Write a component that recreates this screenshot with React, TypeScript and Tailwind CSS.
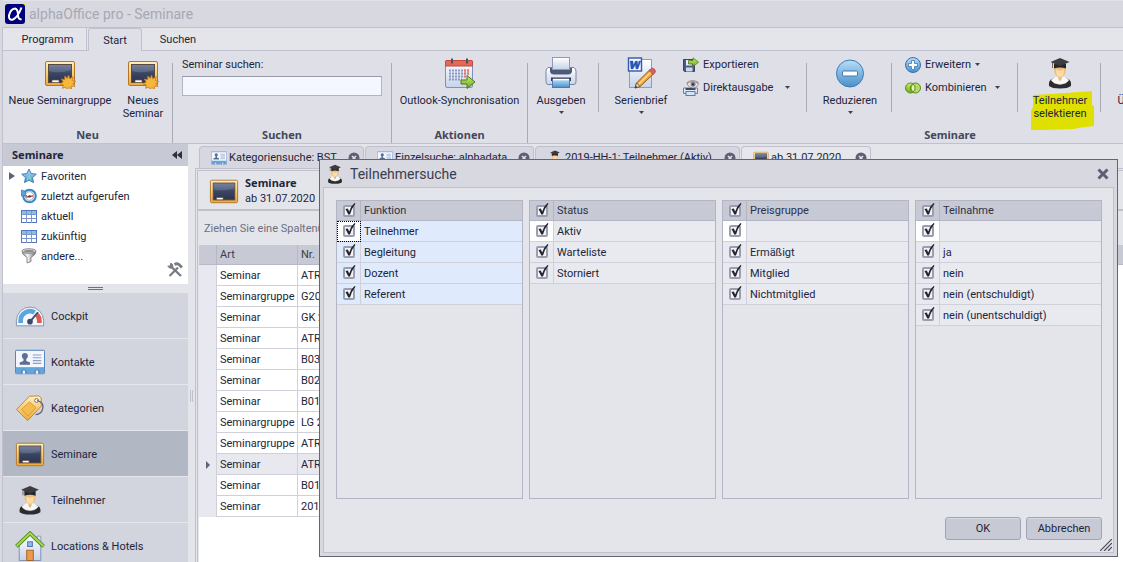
import { useState, type ReactNode } from "react";

type IconProps = { className?: string };

function Defs() {
  return (
    <svg className="absolute size-0" aria-hidden="true">
      <defs>
        <linearGradient id="gold" x1="0" y1="0" x2="0" y2="1">
          <stop offset="0" stopColor="#fff0c0" />
          <stop offset="1" stopColor="#f0a830" />
        </linearGradient>
        <linearGradient id="slate" x1="0" y1="0" x2="0" y2="1">
          <stop offset="0" stopColor="#6c7a98" />
          <stop offset="0.5" stopColor="#3a4560" />
          <stop offset="1" stopColor="#2b3450" />
        </linearGradient>
        <linearGradient id="sky" x1="0" y1="0" x2="0" y2="1">
          <stop offset="0" stopColor="#b8def6" />
          <stop offset="1" stopColor="#4a8fca" />
        </linearGradient>
        <linearGradient id="paper" x1="0" y1="0" x2="0" y2="1">
          <stop offset="0" stopColor="#ffffff" />
          <stop offset="1" stopColor="#c6d3ea" />
        </linearGradient>
        <linearGradient id="lime" x1="0" y1="0" x2="0" y2="1">
          <stop offset="0" stopColor="#c8ee6c" />
          <stop offset="1" stopColor="#6ba81c" />
        </linearGradient>
        <linearGradient id="metal" x1="0" y1="0" x2="1" y2="0">
          <stop offset="0" stopColor="#8c8c8c" />
          <stop offset="0.4" stopColor="#f4f4f4" />
          <stop offset="1" stopColor="#6c6c6c" />
        </linearGradient>
      </defs>
    </svg>
  );
}

function Board({ className, star }: IconProps & { star?: boolean }) {
  return (
    <svg viewBox="0 0 32 32" className={className}>
      <rect x="1.500" y="4.500" width="29" height="24" rx="1.500" fill="url(#gold)" stroke="#b5742a" />
      <rect x="4.500" y="7.500" width="23" height="18" fill="url(#slate)" stroke="#5a4a3c" />
      <path d="M5 8h22v5Q15 17 5 14z" fill="#8391ae" opacity=".35" />
      <rect x="8" y="23" width="7" height="2.400" fill="#fff" stroke="#6b5148" strokeWidth=".7" />
      {star && (
        <path
          d="M24.500 18l1.300 3.800 3.500-2-1 3.800 3.500.9-3 2 2.200 3-3.700-.4.200 3.400-2.700-2-1.900 2.500-1.100-3-3.300 1.300.9-3.400-3.400-.9 3.200-1.900-1.900-3 3.400.6.100-3.600 2.500 2.300z"
          fill="#f6b83c"
          stroke="#c97b1a"
          strokeWidth=".8"
        />
      )}
    </svg>
  );
}

function Graduate({ className }: IconProps) {
  return (
    <svg viewBox="0 0 32 32" className={className}>
      <path d="M10 10h12l-.500 5.500q-1 4-3.500 6V24h-4v-2.500q-2.500-2-3.500-6z" fill="#f0bc78" />
      <path d="M12 12q4 3 8 0l-.500 6q-3.500 4-7 0z" fill="#fbdcaa" />
      <path d="M5 29q-1-6 4-7.500l4-1 3 2 3-2 4 1q5 1.500 4 7.500-3 2.500-11 2.500T5 29z" fill="#2c2c30" />
      <path d="M11 20l2-1 3 4 3-4 2 1 4 3q-2.500 4-9 4.500Q9.500 27 7 23z" fill="#f8f8f8" stroke="#d0d0d0" strokeWidth=".4" />
      <path d="M14 21.500h4L16 24.500z" fill="#eeb878" />
      <path d="M10 6.500h12v5q-6-2-12 0z" fill="#26262a" />
      <path d="M16 1l9.500 4L16 9 6.500 5z" fill="#3b3b40" />
      <path d="M8.500 6v5" stroke="#6c6450" />
    </svg>
  );
}

function Calendar({ className }: IconProps) {
  return (
    <svg viewBox="0 0 32 32" className={className}>
      <rect x="1.500" y="3.500" width="27" height="27" rx="1.500" fill="url(#paper)" stroke="#8090bc" />
      <path d="M1.500 9V4.500q0-1 1-1h25q1 0 1 1V9z" fill="#e46a58" stroke="#c0483c" />
      <path d="M8 1.500v5M23 1.500v5" stroke="#4d5262" strokeWidth="2" />
      <path d="M5 13.500h20M5 16.500h20M5 19.500h15M5 22.500h13" stroke="#8898c4" strokeWidth="2" strokeDasharray="2 1" />
      <path d="M20 13.500h5M20 16.500h5M20 19.500h3" stroke="#f07058" strokeWidth="2" strokeDasharray="2 1" />
      <path d="M17 23h6v-4.500l8 6.500-8 6.500V27h-6z" fill="url(#lime)" stroke="#4c7a16" />
    </svg>
  );
}

function Printer({ className }: IconProps) {
  return (
    <svg viewBox="0 0 32 32" className={className}>
      <path d="M3 10.500h26q2 1 2 4v10q0 3-2 3H3q-2 0-2-3v-10q0-3 2-4z" fill="url(#paper)" stroke="#7786a8" />
      <path d="M5 11h22v4q-1 2.500-4 2.500H9q-3 0-4-2.500z" fill="#4e5b78" />
      <rect x="7.500" y=".500" width="17" height="12" fill="url(#paper)" stroke="#8f9ab4" />
      <path d="M6 20.500h20V24H6z" fill="#303a54" />
      <rect x="7.500" y="22.500" width="17" height="8" fill="url(#sky)" stroke="#5078a8" />
      <path d="M8 22.500h16" stroke="#fff" strokeWidth="1.500" />
    </svg>
  );
}

function WordPencil({ className }: IconProps) {
  return (
    <svg viewBox="0 0 32 32" className={className}>
      <rect x="4.500" y="2.500" width="22" height="28" fill="url(#paper)" stroke="#8c9cc4" />
      <rect x="3.500" y="1" width="13" height="13" fill="#f2f6ff" stroke="#3458ac" strokeWidth="1.400" />
      <path
        d="M5 4h3l.4 4L10.500 4h1.800l.6 4 1-4h2L13 12h-2l-.8-4-2.200 4H6z"
        fill="#2c54b4"
        stroke="#2c54b4"
        strokeWidth=".3"
      />
      <path d="M10 31l1.500-5L25 12.500l4 4L15 29.500z" fill="#f3a43c" stroke="#8d5a2b" />
      <path d="M14 27L26.500 14.500" stroke="#ffe090" strokeWidth="1.400" />
      <path d="M24 13.500l3-2.500q3.500.5 3.500 4l-2.500 2.500z" fill="#d9605c" stroke="#a44848" strokeWidth=".7" />
      <path d="M10 31l1.500-5 3.500 3.500z" fill="#f5dcc0" stroke="#61503c" strokeWidth=".8" />
      <path d="M10 31l.7-2.400 1.800 1.700z" fill="#333" />
    </svg>
  );
}

function ExportIcon({ className }: IconProps) {
  return (
    <svg viewBox="0 0 16 16" className={className}>
      <path d="M.500 2.500h11v12H1.500l-1-1z" fill="#4a5b84" stroke="#35456a" />
      <rect x="3" y="3" width="6" height="5.500" fill="#e8eefa" />
      <rect x="3" y="10.500" width="6.500" height="4" fill="#cfd8e8" />
      <path d="M5.500 3.500H10V.800l5.500 4.400-5.500 4.400V7H5.500z" fill="url(#lime)" stroke="#4f7e18" strokeWidth=".8" />
    </svg>
  );
}

function DirectPrint({ className }: IconProps) {
  return (
    <svg viewBox="0 0 16 16" className={className}>
      <path d="M.500 8h14v5.500H.500z" fill="url(#paper)" stroke="#6c7ea8" />
      <path d="M2.500 8h10v2h-10z" fill="#3a4766" />
      <rect x="3" y="11.500" width="9" height="4" fill="#cfe5fa" stroke="#5c7cb0" />
      <path d="M4 4q4-4.500 11.500-.5Q14 8 10 8 6 8 4 4z" fill="#f3e6dc" stroke="#8c7668" strokeWidth=".8" />
      <circle cx="10" cy="4.300" r="2.500" fill="#6f86a8" />
      <circle cx="10" cy="4.300" r="1.100" fill="#20283c" />
      <path d="M3.500 3Q9-1.500 15.500 2.500" fill="none" stroke="#a08878" />
    </svg>
  );
}

function Minus({ className }: IconProps) {
  return (
    <svg viewBox="0 0 32 32" className={className}>
      <circle cx="16" cy="16.500" r="13.500" fill="url(#sky)" stroke="#3f7ab4" />
      <rect x="8.500" y="14" width="15" height="5" rx="1" fill="#fff" stroke="#3f7ab4" />
    </svg>
  );
}

function Plus({ className }: IconProps) {
  return (
    <svg viewBox="0 0 16 16" className={className}>
      <circle cx="8" cy="8" r="7.500" fill="url(#sky)" stroke="#3572ac" />
      <path d="M6.500 3.500h3v3h3v3h-3v3h-3v-3h-3v-3h3z" fill="#fff" stroke="#3f7ab4" strokeWidth=".8" />
    </svg>
  );
}

function Combine({ className }: IconProps) {
  return (
    <svg viewBox="0 0 16 16" className={className}>
      <circle cx="5.500" cy="8" r="5" fill="url(#lime)" stroke="#5a8c1a" />
      <circle cx="10.500" cy="8" r="5" fill="#a8d84c" fillOpacity=".8" stroke="#5a8c1a" />
      <path d="M8 4q4 4 0 8-4-4 0-8z" fill="#e4f8b0" stroke="#5a8c1a" strokeWidth=".8" />
    </svg>
  );
}

function Star({ className }: IconProps) {
  return (
    <svg viewBox="0 0 16 16" className={className}>
      <path d="M8 1l2.200 4.600 5.100.600-3.800 3.400 1 5L8 12.100l-4.500 2.500 1-5L.7 6.200l5.100-.6z" fill="url(#sky)" stroke="#4080b8" />
      <path d="M8 7l2 3 .5 3L8 11l-2.500 2L6 10z" fill="#7cdcd0" opacity=".8" />
    </svg>
  );
}

function HistoryIcon({ className }: IconProps) {
  return (
    <svg viewBox="0 0 16 16" className={className}>
      <circle cx="8.500" cy="8" r="6.300" fill="#eef6fc" stroke="#3d86c4" strokeWidth="2" />
      <circle cx="8.500" cy="8" r="4.300" fill="#fff" stroke="#7a98b0" strokeWidth=".8" />
      <path d="M0 2v6h6L4 6.200 5 4.500 2.500 2.500z" fill="#5aa4dc" stroke="#2f70ac" strokeWidth=".6" />
      <path d="M5 9l3.500-.5L12 8" stroke="#d84c3c" strokeWidth="1.300" />
      <circle cx="8.500" cy="8.400" r="1.200" fill="#444" />
    </svg>
  );
}

function GridIcon({ className }: IconProps) {
  return (
    <svg viewBox="0 0 16 16" className={className}>
      <rect x=".500" y="2.500" width="15" height="12" fill="#fff" stroke="#5876c0" />
      <path d="M1 3h14v3H1z" fill="#84c4d4" />
      <path d="M.5 6.500h15M.5 10.500h15M5.500 3v12M10.500 3v12" stroke="#7c94d4" />
    </svg>
  );
}

function Funnel({ className }: IconProps) {
  return (
    <svg viewBox="0 0 16 16" className={className}>
      <path d="M1 3.500q0 3 5 6V15l4-1.500v-4q5-3 5-6z" fill="url(#metal)" stroke="#777" strokeWidth=".8" />
      <ellipse cx="8" cy="3" rx="7" ry="2.300" fill="#d8d8d8" stroke="#777" strokeWidth=".8" />
      <ellipse cx="8" cy="3.300" rx="5" ry="1.200" fill="#8c8c8c" />
    </svg>
  );
}

function Tools({ className }: IconProps) {
  return (
    <svg viewBox="0 0 16 16" className={className} fill="none" stroke="#777a80">
      <path d="M4 4.500L14 14" strokeWidth="2.400" />
      <path d="M3.800 1.200q2.500.8 2 3.300-.8 2.200-3.300 1.500L.8 4l2.400.2z" fill="#777a80" strokeWidth="1" />
      <path d="M2.500 14L11 5.500" strokeWidth="2.200" />
      <path d="M7.500 2.500q2.500-1.500 4.500 0l3 3" strokeWidth="2.800" />
    </svg>
  );
}

function Gauge({ className }: IconProps) {
  return (
    <svg viewBox="0 0 32 32" className={className}>
      <path d="M1.500 26.500V21a14.500 14.500 0 0 1 29 0v5.500z" fill="#f4f7fc" stroke="#7d90b4" />
      <path d="M6 23.500v-2.500A10 10 0 0 1 21 12.300" fill="none" stroke="#5ca4dc" strokeWidth="5" />
      <path d="M23.500 14.500A10 10 0 0 1 26 21v2.500" fill="none" stroke="#dc5a50" strokeWidth="5" />
      <circle cx="16" cy="22" r="3" fill="#3c4a6c" />
      <path d="M16 22l8.500-10" stroke="#3c4a6c" strokeWidth="2" />
    </svg>
  );
}

function Card({ className }: IconProps) {
  return (
    <svg viewBox="0 0 32 32" className={className}>
      <rect x=".500" y="3.500" width="31" height="25" rx="1" fill="#f2f6fd" stroke="#4a7cb8" />
      <path d="M1 21.500h30V28H1z" fill="#62a4dc" />
      <circle cx="10.500" cy="9.500" r="3.200" fill="#5c6e94" />
      <path d="M9 11h3v4l4 1.500V19H5v-2.500L9 15z" fill="#5c6e94" />
      <path d="M19 8.500h9M19 11.500h9M19 14.500h9M19 17.500h9" stroke="#8ca0cc" strokeWidth="1.200" />
      <path d="M7.500 28.500v-3q2-3 4 0v3M21.500 28.500v-3q2-3 4 0v3" fill="#e8eef8" stroke="#3c6494" />
    </svg>
  );
}

function Tag({ className }: IconProps) {
  return (
    <svg viewBox="0 0 32 32" className={className}>
      <path d="M1.500 17.500L15.500 3.500l10-.500 2.500 2.500v8.500L13.500 29.500z" fill="url(#gold)" stroke="#c88424" />
      <path d="M7 17.500l8.500-8 7 6.500-9 8.500z" fill="#f4bc50" stroke="#d89a34" />
      <circle cx="23" cy="8" r="2" fill="#fff" stroke="#6c6878" />
      <path d="M23.500 8q8 2 6 9-1.500 6-7.500 6" fill="none" stroke="#5e6070" strokeWidth="1.300" />
    </svg>
  );
}

function House({ className }: IconProps) {
  return (
    <svg viewBox="0 0 32 32" className={className}>
      <path d="M23.500 5.500h4V15h-4z" fill="#e0e8f4" stroke="#8c9cbc" />
      <path d="M4.500 15L16 4l11.500 11v16.500h-23z" fill="url(#paper)" stroke="#7d8cb4" />
      <rect x="12.500" y="20.500" width="7" height="11" fill="#ec9c48" stroke="#a85e20" />
      <rect x="13.500" y="11.500" width="5" height="5" fill="#8cbcec" stroke="#4c6ca4" />
      <path d="M1.500 16.500L16 2.500l14.500 14" fill="none" stroke="#4f8c1c" strokeWidth="4" />
      <path d="M1.800 16L16 2.500 30.200 16" fill="none" stroke="#a4dc50" strokeWidth="2" />
    </svg>
  );
}

function Caret({ className = "" }: IconProps) {
  return (
    <svg viewBox="0 0 5 3" className={`h-[3px] w-[5px] ${className}`}>
      <path d="M0 0h5L2.500 3z" fill="#3f4252" />
    </svg>
  );
}

function BigButton({
  icon,
  children,
  width,
  caret,
}: {
  icon: ReactNode;
  children: ReactNode;
  width: string;
  caret?: boolean;
}) {
  return (
    <button className={`relative flex shrink-0 flex-col items-center pt-1.5 leading-[13px] ${width}`}>
      {icon}
      <span className="relative mt-[5px] whitespace-nowrap">{children}</span>
      {caret && <Caret className="mt-1" />}
    </button>
  );
}

function SmallButton({ icon, label, caret }: { icon: ReactNode; label: string; caret?: string }) {
  return (
    <button className="flex h-[23px] items-center whitespace-nowrap">
      {icon}
      <span className="ml-1 pt-0.5">{label}</span>
      {caret && <Caret className={caret} />}
    </button>
  );
}

function Group({ title, width, children }: { title?: string; width: string; children: ReactNode }) {
  return (
    <div className={`flex shrink-0 flex-col ${width}`}>
      <div className="flex flex-1">{children}</div>
      <div className="pb-px text-center font-['Noto_Sans',sans-serif] font-bold leading-[14px] text-[#444858]">
        {title}
      </div>
    </div>
  );
}

const Divider = () => <div className="mt-3 w-px shrink-0 bg-[#a9abb6]" />;
const ShortDivider = () => <div className="mt-3 h-[49px] w-px shrink-0 bg-[#a9abb6]" />;

function Ribbon() {
  return (
    <div className="flex h-[93px] overflow-hidden border-b border-l border-[#c0c1ce] bg-[#dfdfe8]">
      <Group title="Neu" width="w-[169px]">
        <BigButton width="ml-[3px] w-[108px]" icon={<Board star className="size-8" />}>
          Neue Seminargruppe
        </BigButton>
        <BigButton width="ml-[3px] w-[52px]" icon={<Board star className="size-8" />}>
          Neues
          <br />
          Seminar
        </BigButton>
      </Group>
      <Divider />
      <Group title="Suchen" width="w-[218px]">
        <div className="flex flex-1 flex-col px-[9px] pt-[7px]">
          <label htmlFor="search" className="leading-[14px]">
            Seminar suchen:
          </label>
          <input
            id="search"
            className="mt-1 h-5 w-full border border-[#b0b3c2] border-t-[#9599a8] bg-[#f4f7ff] px-1 outline-none"
          />
        </div>
      </Group>
      <Divider />
      <Group title="Aktionen" width="w-[135px]">
        <BigButton width="w-full" icon={<Calendar className="size-8" />}>
          Outlook-Synchronisation
        </BigButton>
      </Group>
      <Divider />
      <Group title="Seminare" width="w-[844px]">
        <BigButton width="mr-1 w-[66px]" caret icon={<Printer className="size-8" />}>
          Ausgeben
        </BigButton>
        <ShortDivider />
        <BigButton width="ml-2 w-[68px]" caret icon={<WordPencil className="size-8" />}>
          Serienbrief
        </BigButton>
        <div className="ml-2 flex w-[123px] flex-col pt-0.5">
          <SmallButton icon={<ExportIcon className="size-4" />} label="Exportieren" />
          <SmallButton icon={<DirectPrint className="size-4" />} label="Direktausgabe" caret="ml-3" />
        </div>
        <ShortDivider />
        <BigButton width="ml-0.5 w-[82px]" caret icon={<Minus className="size-8" />}>
          Reduzieren
        </BigButton>
        <ShortDivider />
        <div className="ml-[13px] flex w-28 flex-col pt-0.5">
          <SmallButton icon={<Plus className="size-4" />} label="Erweitern" caret="ml-1" />
          <SmallButton icon={<Combine className="size-4" />} label="Kombinieren" caret="ml-2" />
        </div>
        <ShortDivider />
        <BigButton
          width="ml-0.5 w-20"
          icon={
            <>
              <Graduate className="size-8" />
              <svg viewBox="0 0 63 39" className="absolute left-[11px] top-10 h-[39px] w-[63px]">
                <path d="M2 4l18-1L61 0v14l2 1v20l-16 2-4 1-31 1H0V20l2-4z" fill="#e0e000" />
              </svg>
            </>
          }
        >
          Teilnehmer
          <br />
          selektieren
        </BigButton>
        <ShortDivider />
        <BigButton width="w-10" icon={<span className="size-8" />}>
          Ü
        </BigButton>
      </Group>
    </div>
  );
}

const folders = [
  { label: "Favoriten", Icon: Star, expandable: true },
  { label: "zuletzt aufgerufen", Icon: HistoryIcon },
  { label: "aktuell", Icon: GridIcon },
  { label: "zukünftig", Icon: GridIcon },
  { label: "andere...", Icon: Funnel },
];

const modules = [
  { label: "Cockpit", Icon: Gauge },
  { label: "Kontakte", Icon: Card },
  { label: "Kategorien", Icon: Tag },
  { label: "Seminare", Icon: Board },
  { label: "Teilnehmer", Icon: Graduate },
  { label: "Locations & Hotels", Icon: House },
];

function Sidebar() {
  const [active, setActive] = useState("Seminare");
  return (
    <aside className="flex w-[186px] shrink-0 flex-col border-l border-[#c0c1ce]">
      <div className="flex h-[22px] shrink-0 items-center justify-between bg-[#c7c9d5] pl-[9px] pr-1.5 font-['Noto_Sans',sans-serif] font-bold">
        Seminare
        <button aria-label="Navigation einklappen">
          <svg viewBox="0 0 10 8" className="h-2 w-2.5">
            <path d="M5 0v8L0 4zM10 0v8L5 4z" fill="#2c2f3c" />
          </svg>
        </button>
      </div>
      <div className="relative h-[118px] shrink-0 bg-white">
        {folders.map(({ label, Icon, expandable }) => (
          <a key={label} href="#" className="flex h-5 items-center pl-1.5">
            <span className="w-3">
              {expandable && (
                <svg viewBox="0 0 6 8" className="h-2 w-1.5">
                  <path d="M0 0l6 4-6 4z" fill="#5f6274" />
                </svg>
              )}
            </span>
            <Icon className="size-4" />
            <span className="ml-1 pt-0.5">{label}</span>
          </a>
        ))}
        <Tools className="absolute bottom-1.5 right-[5px] size-4" />
      </div>
      <div className="flex h-[9px] shrink-0 items-center justify-center">
        <div className="h-[3px] w-[15px] border-y border-[#6d7082]" />
      </div>
      <nav>
        {modules.map(({ label, Icon }) => (
          <button
            key={label}
            onClick={() => setActive(label)}
            className={`flex h-[46px] w-full items-center border-b border-[#e6e7ee] pl-3 pt-px ${
              active === label ? "bg-[#b1b8c4]" : "bg-[#d2d4de]"
            }`}
          >
            <Icon className="size-[30px]" />
            <span className="ml-1.5 pt-0.5">{label}</span>
          </button>
        ))}
      </nav>
    </aside>
  );
}

const tabs = [
  { label: "Kategoriensuche: BST", Icon: Card, width: "w-[165px]" },
  { label: "Einzelsuche: alphadata", Icon: Card, width: "w-[169px]" },
  { label: "2019-HH-1: Teilnehmer (Aktiv)", Icon: Graduate, width: "w-[205px]" },
  { label: "ab 31.07.2020", Icon: Board, width: "w-[130px]" },
];

const rows = [
  ["Seminar", "ATR"],
  ["Seminargruppe", "G20"],
  ["Seminar", "GK 2"],
  ["Seminar", "ATR"],
  ["Seminar", "B03"],
  ["Seminar", "B02"],
  ["Seminar", "B01"],
  ["Seminargruppe", "LG 2"],
  ["Seminargruppe", "ATR"],
  ["Seminar", "ATR"],
  ["Seminar", "B01"],
  ["Seminar", "201"],
];

function Workspace() {
  return (
    <main className="flex min-w-0 flex-1 flex-col">
      <div className="flex h-6 shrink-0 items-end gap-px pl-1">
        {tabs.map(({ label, Icon, width }, i) => (
          <div
            key={label}
            className={`flex h-[22px] shrink-0 items-center rounded-t-sm border border-b-0 border-[#bfc0cc] pl-[11px] pr-[3px] ${width} ${
              i === tabs.length - 1 ? "bg-[#e6e7ed]" : "bg-[#d6d7e0]"
            }`}
          >
            <Icon className="size-4 shrink-0" />
            <span className="ml-0.5 flex-1 whitespace-nowrap pt-0.5">{label}</span>
            <button aria-label="Tab schließen">
              <svg viewBox="0 0 12 12" className="size-3">
                <circle cx="6" cy="6" r="5.500" fill="#5d6074" />
                <path d="M4 4l4 4M8 4L4 8" stroke="#e4e5eb" strokeWidth="1.500" />
              </svg>
            </button>
          </div>
        ))}
      </div>
      <div className="flex flex-1 flex-col border-l border-t border-[#bfc0cc] pl-px pt-px">
        <div className="flex flex-1 flex-col border-l border-t border-[#bfc0cc]">
          <div className="flex h-10 shrink-0 items-center border-b-2 border-[#bfc0cc] pl-[11px] pt-0.5">
            <Board className="size-[30px]" />
            <div className="ml-1.5 leading-4">
              <div className="font-['Noto_Sans',sans-serif] font-bold">Seminare</div>
              <div>ab 31.07.2020</div>
            </div>
          </div>
          <div className="flex h-[34px] shrink-0 items-center pl-1.5 pt-0.5 text-[#6c6f80]">
            Ziehen Sie eine Spaltenü
          </div>
          <div className="ml-px flex-1 bg-white">
            <table className="w-full table-fixed border-separate border-spacing-0">
              <colgroup>
                <col className="w-[18px]" />
                <col className="w-[81px]" />
                <col className="w-[81px]" />
                <col />
              </colgroup>
              <thead>
                <tr className="h-5 bg-[#c7c9d5] text-left text-[#3a3d4c]">
                  <th className="border-b border-r border-[#b6b8c8] p-0" />
                  <th className="border-b border-r border-[#b6b8c8] pb-0 pl-[3px] pt-0.5 font-normal">Art</th>
                  <th className="border-b border-r border-[#b6b8c8] pb-0 pl-[3px] pt-0.5 font-normal">Nr.</th>
                  <th className="border-b border-[#b6b8c8] p-0" />
                </tr>
              </thead>
              <tbody>
                {rows.map(([kind, no], i) => {
                  const cell = `border-b border-r border-[#cfd0da] pb-0 pl-[3px] pt-0.5 ${
                    i === 9 ? "bg-[#e8e9ef]" : ""
                  }`;
                  return (
                    <tr key={i} className="h-[21px]">
                      <td className="border-r border-[#cfd0da] bg-[#e8e9f0] py-0 pl-[7px]">
                        {i === 9 && (
                          <svg viewBox="0 0 4 8" className="h-2 w-1">
                            <path d="M0 0l4 4-4 4z" fill="#5f6274" />
                          </svg>
                        )}
                      </td>
                      <td className={cell}>{kind}</td>
                      <td className={cell}>{no}</td>
                      <td />
                    </tr>
                  );
                })}
              </tbody>
            </table>
          </div>
        </div>
      </div>
    </main>
  );
}

const filters = [
  { title: "Funktion", items: ["Teilnehmer", "Begleitung", "Dozent", "Referent"] },
  { title: "Status", items: ["Aktiv", "Warteliste", "Storniert"] },
  { title: "Preisgruppe", items: ["", "Ermäßigt", "Mitglied", "Nichtmitglied"] },
  { title: "Teilnahme", items: ["", "ja", "nein", "nein (entschuldigt)", "nein (unentschuldigt)"] },
];

function Check({ id, label }: { id: string; label: string }) {
  return (
    <span className="relative ml-1.5 block size-3">
      <input
        id={id}
        type="checkbox"
        defaultChecked
        aria-label={label}
        className="peer block size-3 appearance-none rounded-[2px] border-2 border-[#9a9eb0] bg-[#f2f3f7]"
      />
      <svg
        viewBox="0 0 14 14"
        className="pointer-events-none absolute -top-0.5 left-0 hidden size-3.5 peer-checked:block"
      >
        <path d="M2.500 6l2.300-.5 1.400 3Q8 3 11.500 0l1 .8Q8.500 5.500 7 11.500H5.300z" fill="#22242e" />
      </svg>
    </span>
  );
}

function FilterPanel({ title, items, selected }: { title: string; items: string[]; selected?: boolean }) {
  return (
    <div className="border border-[#b3b5c5] bg-[#e4e5eb]">
      <table className="w-full table-fixed border-separate border-spacing-0">
        <colgroup>
          <col className="w-6" />
          <col />
        </colgroup>
        <thead>
          <tr className="h-5 bg-[#c7c9d5] text-left">
            <th className="border-b border-r border-[#b3b5c5] p-0">
              <Check id={title} label={`${title}: alle`} />
            </th>
            <th className="border-b border-[#b3b5c5] pb-0 pl-[3px] pt-0.5 font-normal text-[#2f3242]">
              <label htmlFor={title}>{title}</label>
            </th>
          </tr>
        </thead>
        <tbody>
          {items.map((item, i) => (
            <tr key={i} className={`h-[21px] ${selected ? "bg-[#e0eafd]" : "bg-[#e9eaf0]"}`}>
              <td
                className={`border-b border-r border-[#cfd0da] p-0 ${i === 0 ? "bg-white" : ""} ${
                  i === 0 && selected ? "outline-1 -outline-offset-1 outline-dotted outline-black" : ""
                }`}
              >
                <Check id={`${title}-${i}`} label={item || "ohne Angabe"} />
              </td>
              <td className="border-b border-[#cfd0da] pb-0 pl-[3px] pt-0.5">
                {item && <label htmlFor={`${title}-${i}`}>{item}</label>}
              </td>
            </tr>
          ))}
        </tbody>
      </table>
    </div>
  );
}

function ParticipantDialog() {
  const button =
    "h-[23px] w-[76px] rounded-[3px] border border-[#9fa4b6] bg-[#c7c9d5] pt-0.5 shadow-[inset_0_1px_0_#d6d8e2]";
  return (
    <div
      role="dialog"
      aria-labelledby="dialog-title"
      className="absolute bottom-[5px] left-[319px] right-[5px] top-[159px] flex flex-col border border-[#62657a] bg-[#d8d8e1] px-[3px] pb-[3px]"
    >
      <div className="flex h-[27px] shrink-0 items-center pl-0.5 pr-[5px]">
        <Graduate className="size-5" />
        <h2 id="dialog-title" className="ml-[5px] flex-1 pt-0.5 text-[14px] text-[#3a3d4e]">
          Teilnehmersuche
        </h2>
        <button aria-label="Schließen">
          <svg viewBox="0 0 12 12" className="size-3">
            <path d="M1.500 1.500l9 9M10.500 1.500l-9 9" stroke="#5d6074" strokeWidth="3" />
          </svg>
        </button>
      </div>
      <form className="relative flex flex-1 flex-col border border-[#c0c1ce] bg-[#e4e5eb] pb-3 pl-3 pr-[11px] pt-3">
        <div className="grid flex-1 grid-cols-4 gap-1.5">
          {filters.map((f, i) => (
            <FilterPanel key={f.title} {...f} selected={i === 0} />
          ))}
        </div>
        <div className="mt-[18px] flex justify-end gap-[5px]">
          <button type="button" className={button}>
            OK
          </button>
          <button type="button" className={button}>
            Abbrechen
          </button>
        </div>
        <svg viewBox="0 0 12 12" className="absolute bottom-px right-px size-3">
          <path d="M0 12L12 0M4 12l8-8M8 12l4-4" stroke="#4a4c5a" strokeWidth="1.200" />
        </svg>
      </form>
    </div>
  );
}

export default function App() {
  return (
    <div className="relative flex h-screen flex-col overflow-hidden bg-[#d8d8e1] pl-0.5 font-[Roboto,sans-serif] text-[11px] text-[#22253a]">
      <Defs />
      <header className="flex h-[27px] shrink-0 items-center border-t border-[#e2e3ea] pl-[3px]">
        <svg viewBox="0 0 20 20" className="size-5">
          <rect width="20" height="20" fill="#e8e000" />
          <rect width="20" height="20" rx="3" fill="#00007c" />
          <path
            d="M16.500 3.500Q13 13 8 15.500 3.500 16.500 4 11.500 5.500 5 10 4.500q3 .500 3 7 .500 4.500 3.500 3.500"
            fill="none"
            stroke="#fff"
            strokeWidth="2"
          />
        </svg>
        <h1 className="ml-1 text-[14px] text-[#a6a8b4]">alphaOffice pro - Seminare</h1>
      </header>
      <div className="flex h-6 shrink-0 border-b border-l border-t border-[#c0c1ce] bg-[#e4e5eb]">
        <button className="w-[84px] border-r border-[#c0c1ce] pl-1.5 pt-0.5">Programm</button>
        <button className="-mb-px ml-px w-[54px] rounded-t-[3px] border border-b-0 border-[#c0c1ce] bg-[#dfdfe8] pt-0.5">
          Start
        </button>
        <button className="ml-1.5 w-[60px] pt-0.5">Suchen</button>
      </div>
      <Ribbon />
      <div className="flex min-h-0 flex-1 bg-[#e4e5eb]">
        <Sidebar />
        <div className="flex w-[7px] shrink-0 items-center justify-center pt-[86px]">
          <div className="h-3 w-[3px] border-x border-[#c0c1ce]" />
        </div>
        <Workspace />
      </div>
      <ParticipantDialog />
    </div>
  );
}
